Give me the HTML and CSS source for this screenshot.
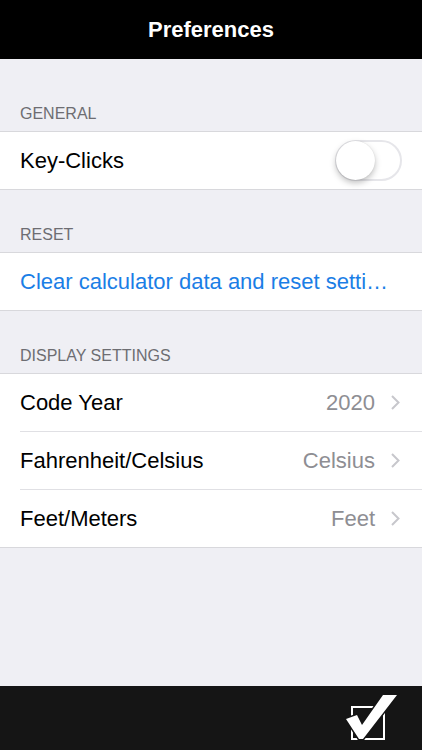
FILE: index.html
```html
<!DOCTYPE html>
<html lang="en">
<head>
    <meta charset="UTF-8">
    <meta name="viewport" content="width=device-width, initial-scale=1.0">
    <title>Preferences</title>
    <link rel="stylesheet" href="styles.css">
</head>
<body>
    <header class="navbar">
        <h1>Preferences</h1>
    </header>
    <main class="content">
        <div class="section-header first">GENERAL</div>
        <div class="group">
            <div class="row">
                <span class="label">Key-Clicks</span>
                <span class="switch"><span class="knob"></span></span>
            </div>
        </div>

        <div class="section-header">RESET</div>
        <div class="group">
            <div class="row">
                <span class="label action">Clear calculator data and reset setti…</span>
            </div>
        </div>

        <div class="section-header">DISPLAY SETTINGS</div>
        <div class="group">
            <div class="row">
                <span class="label">Code Year</span>
                <span class="value">2020</span>
                <svg class="chevron" viewBox="0 0 9 15" width="9" height="15"><path d="M1 1 L7.5 7.5 L1 14" fill="none" stroke="#c7c7cc" stroke-width="2"/></svg>
            </div>
            <div class="row">
                <span class="label">Fahrenheit/Celsius</span>
                <span class="value">Celsius</span>
                <svg class="chevron" viewBox="0 0 9 15" width="9" height="15"><path d="M1 1 L7.5 7.5 L1 14" fill="none" stroke="#c7c7cc" stroke-width="2"/></svg>
            </div>
            <div class="row">
                <span class="label">Feet/Meters</span>
                <span class="value">Feet</span>
                <svg class="chevron" viewBox="0 0 9 15" width="9" height="15"><path d="M1 1 L7.5 7.5 L1 14" fill="none" stroke="#c7c7cc" stroke-width="2"/></svg>
            </div>
        </div>
    </main>
    <footer class="toolbar">
        <svg class="done" viewBox="0 0 60 64" width="60" height="64">
            <rect x="12" y="21" width="32" height="32" fill="none" stroke="#fff" stroke-width="2"/>
            <polygon points="6,33 17,29 22,39 43,9 57,9 23,53 19,53" fill="#fff" stroke="#151515" stroke-width="3" stroke-linejoin="miter" paint-order="stroke"/>
        </svg>
    </footer>
</body>
</html>
```

FILE: styles.css
```css
html, body {
    margin: 0;
    height: 100%;
}
body {
    font-family: "Liberation Sans", Arial, sans-serif;
    background: #efeff4;
    display: flex;
    flex-direction: column;
    color: #000;
}
.navbar {
    background: #000;
    height: 59px;
    display: flex;
    align-items: center;
    justify-content: center;
}
.navbar h1 {
    margin: 0;
    color: #fff;
    font-size: 22px;
    font-weight: bold;
    padding-top: 1px;
}
.content {
    flex: 1;
}
.section-header {
    font-size: 16px;
    line-height: 20px;
    color: #6d6d72;
    padding: 35px 20px 7px;
}
.section-header.first {
    padding-top: 45px;
}
.group {
    background: #fff;
    border-top: 1px solid #d8d8dc;
    border-bottom: 1px solid #d8d8dc;
}
.row {
    height: 57px;
    display: flex;
    align-items: center;
    padding: 0 22px 0 20px;
}
.row + .row {
    border-top: 1px solid #e0e0e4;
    margin-left: 20px;
    padding-left: 0;
}
.label {
    flex: 1;
    font-size: 22px;
    white-space: nowrap;
}
.label.action {
    color: #1a7ee6;
}
.value {
    font-size: 22px;
    color: #8e8e93;
    margin-right: 16px;
}
.chevron {
    display: block;
}
.switch {
    width: 63px;
    height: 37px;
    border: 2px solid #e6e6ea;
    border-radius: 21px;
    position: relative;
    margin-right: -2px;
}
.knob {
    position: absolute;
    left: -1px;
    top: -1px;
    width: 39px;
    height: 39px;
    border-radius: 50%;
    background: #fff;
    box-shadow: 0 3px 6px rgba(0, 0, 0, 0.25), 0 0 1px rgba(0, 0, 0, 0.15);
}
.toolbar {
    height: 64px;
    background: #151515;
    display: flex;
    justify-content: flex-end;
    padding-right: 22px;
}
.done {
    display: block;
}
```
